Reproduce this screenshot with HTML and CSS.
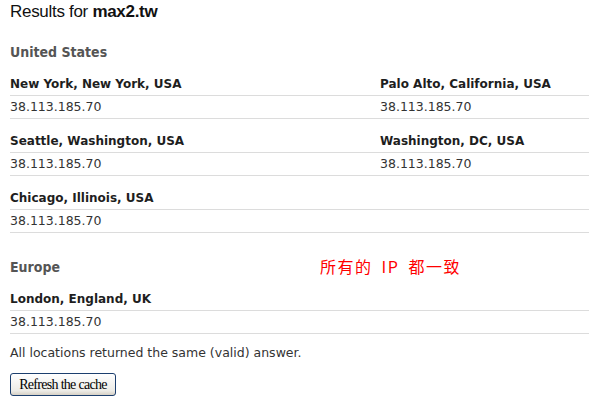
FILE: index.html
```html
<!DOCTYPE html>
<html>
<head>
<meta charset="utf-8">
<link rel="stylesheet" href="styles.css">
</head>
<body>
<div class="page">
  <h1 class="title">Results for <b>max2.tw</b></h1>

  <section class="region">
    <h2 class="region-name">United States</h2>
    <div class="grid">
      <div class="loc"><div class="loc-name">New York, New York, USA</div><div class="loc-ip">38.113.185.70</div></div>
      <div class="loc"><div class="loc-name">Palo Alto, California, USA</div><div class="loc-ip">38.113.185.70</div></div>
      <div class="loc"><div class="loc-name">Seattle, Washington, USA</div><div class="loc-ip">38.113.185.70</div></div>
      <div class="loc"><div class="loc-name">Washington, DC, USA</div><div class="loc-ip">38.113.185.70</div></div>
      <div class="loc"><div class="loc-name">Chicago, Illinois, USA</div><div class="loc-ip">38.113.185.70</div></div>
      <div class="loc"><div class="loc-name">&nbsp;</div><div class="loc-ip">&nbsp;</div></div>
    </div>
  </section>

  <section class="region">
    <h2 class="region-name">Europe</h2>
    <div class="grid">
      <div class="loc"><div class="loc-name">London, England, UK</div><div class="loc-ip">38.113.185.70</div></div>
      <div class="loc"><div class="loc-name">&nbsp;</div><div class="loc-ip">&nbsp;</div></div>
    </div>
  </section>

  <p class="summary">All locations returned the same (valid) answer.</p>
  <button class="refresh">Refresh the cache</button>

  <div class="note">所有的 IP 都一致</div>
</div>
</body>
</html>
```

FILE: styles.css
```css
html, body {
  margin: 0;
  padding: 0;
  background: #fff;
}
.page {
  position: relative;
  padding: 2px 0 0 10px;
  font-family: "DejaVu Sans", Verdana, sans-serif;
  font-size: 12.5px;
  color: #222;
}
.title {
  margin: 0;
  font-family: "Liberation Sans", Arial, sans-serif;
  font-size: 17px;
  font-weight: normal;
  line-height: 20px;
  letter-spacing: -0.3px;
  color: #111;
}
.title b {
  font-weight: bold;
}
.region {
  margin-top: 24px;
}
.title + .region {
  margin-top: 20px;
}
.region-name {
  margin: 0 0 11px;
  font-family: "DejaVu Sans Condensed", "DejaVu Sans", Verdana, sans-serif;
  font-size: 14px;
  font-weight: bold;
  line-height: 20px;
  color: #555;
}
.grid {
  display: grid;
  grid-template-columns: 370px 1fr;
  row-gap: 11px;
}
.loc-name,
.loc-ip {
  line-height: 22px;
  border-bottom: 1px solid #dcdcdc;
  white-space: nowrap;
}
.loc-name {
  font-weight: bold;
  font-size: 12px;
  color: #1e1e1e;
}
.loc-ip {
  color: #333;
}
.summary {
  margin: 9px 0 0;
  line-height: 20px;
  color: #333;
}
.refresh {
  display: block;
  margin-top: 10px;
  height: 23px;
  width: 106px;
  padding: 0;
  font-family: "Liberation Serif", "Times New Roman", serif;
  font-size: 14px;
  letter-spacing: -0.7px;
  color: #000;
  border: 1px solid #1c3f6e;
  border-radius: 3px;
  background: linear-gradient(#ffffff, #ecebe6 80%, #d6d0c5);
}
.note {
  position: absolute;
  left: 320px;
  top: 256px;
  font-family: "Noto Sans CJK TC", "Noto Sans CJK SC", serif;
  font-size: 16px;
  line-height: 20px;
  letter-spacing: 1.5px;
  word-spacing: 4px;
  color: #f00;
}
```
